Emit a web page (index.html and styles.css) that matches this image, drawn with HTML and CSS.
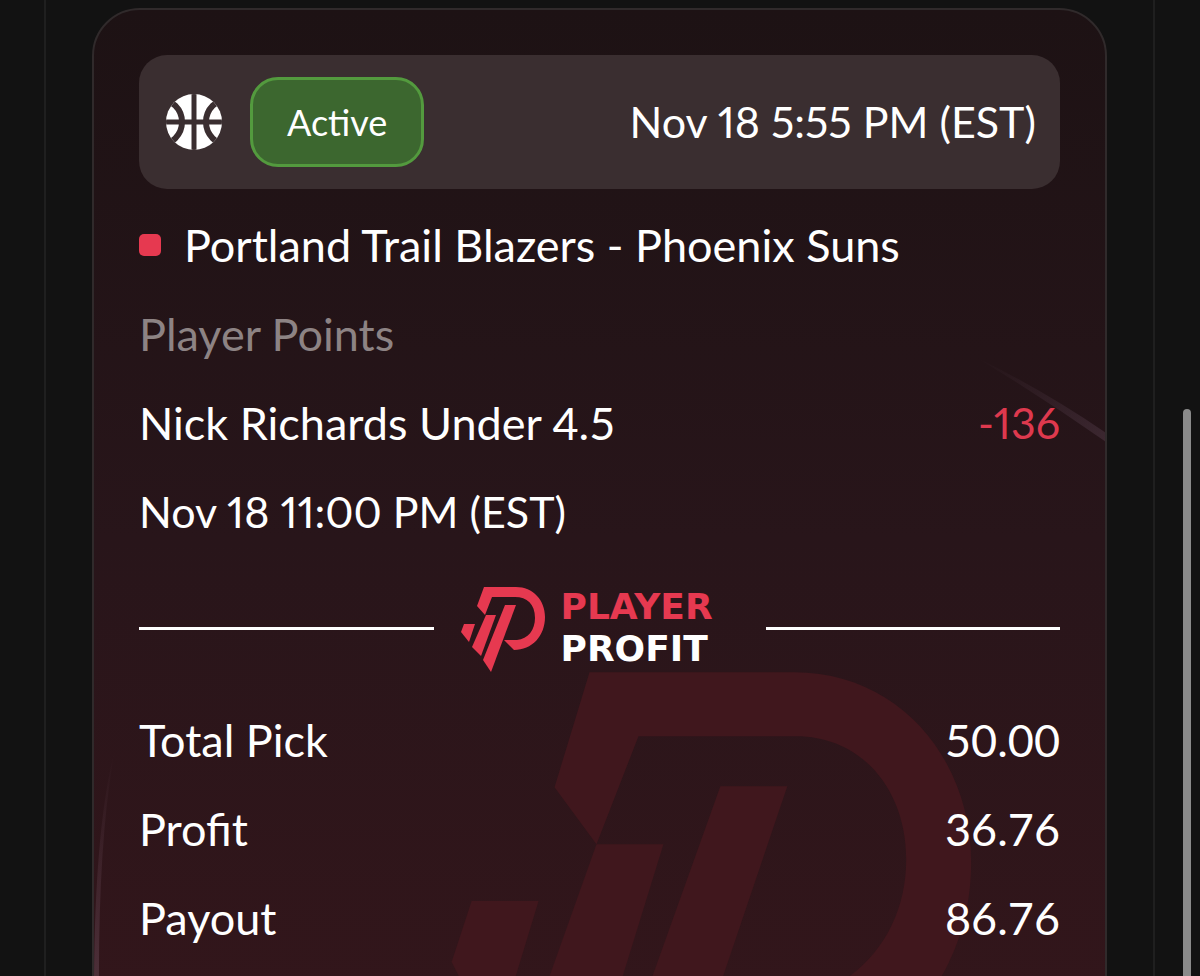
FILE: index.html
```html
<!DOCTYPE html>
<html lang="en">
  <head>
    <meta charset="utf-8">
    <title>Player Profit</title>
    <link rel="stylesheet" href="styles.css">
  </head>
  <body>
    <main class="panel">
      <article class="card">
        <svg class="card-bg" viewBox="94 10 1012 1064" preserveAspectRatio="xMaxYMin slice" aria-hidden="true">
          <defs>
            <linearGradient id="streak-right" x1="0" y1="0" x2="1" y2="1">
              <stop offset="0" stop-color="#4a3440" stop-opacity="0"/>
              <stop offset="1" stop-color="#4a3440" stop-opacity=".6"/>
            </linearGradient>
            <linearGradient id="streak-left" x1="0" y1="0" x2="0" y2="1">
              <stop offset="0" stop-color="#5a3c48" stop-opacity="0"/>
              <stop offset="1" stop-color="#5a3c48" stop-opacity=".7"/>
            </linearGradient>
          </defs>
          <path d="M976 357Q1045 391 1108 434V443Q1045 399 976 357Z" fill="url(#streak-right)"/>
          <path d="M115 750Q94 830 94 994H99Q98 840 115 750Z" fill="url(#streak-left)"/>
          <g fill="#40171d">
            <path d="M590 673H795C900 673 972 760 972 863C972 912 958 956 932 994H822C878 968 907 918 907 860C907 790 862 737 797 737H639L597 845L555 788Z"/>
            <path d="M721 787H788L718 994H647Z"/>
            <path d="M597 845H664L618 994H544Z"/>
            <path d="M472 902H539L511 994H468L452 963Z"/>
          </g>
        </svg>

        <header class="card-head">
          <svg class="ball" viewBox="0 0 56 56" role="img" aria-label="Basketball">
            <defs>
              <clipPath id="ball-clip"><circle cx="28" cy="28" r="28"/></clipPath>
            </defs>
            <circle cx="28" cy="28" r="28" fill="#fff"/>
            <g clip-path="url(#ball-clip)" fill="none" stroke="#3a2e30">
              <path d="M28 0V56M0 28H56" stroke-width="5"/>
              <g stroke-width="6">
                <circle cx="-7" cy="28" r="23"/>
                <circle cx="63" cy="28" r="23"/>
              </g>
            </g>
          </svg>
          <span class="status">Active</span>
          <time class="placed">Nov 18 5:55 PM (EST)</time>
        </header>

        <div class="rows">
          <h2 class="row match">Portland Trail Blazers - Phoenix Suns</h2>
          <p class="row market">Player Points</p>
          <p class="row"><span>Nick Richards Under 4.5</span><span class="odds">-136</span></p>
          <p class="row"><time>Nov 18 11:00 PM (EST)</time></p>
        </div>

        <div class="divider">
          <svg class="mark" viewBox="0 0 84 88" aria-hidden="true">
            <g fill="#e63950">
              <path d="M23 3H55C72 3 84 16 84 33C84 52 71 66 53 66L43 56L56 56C67 55 74 46 74 34C74 20 66 13 54 13H31L24 31L16 22Z"/>
              <path d="M44 21H55L30 88L22 76Z"/>
              <path d="M25 31H35L20 72L11 63Z"/>
              <path d="M3 40H14L8 58L0 48Z"/>
            </g>
          </svg>
          <div class="wordmark"><span class="red">PLAYER</span><span>PROFIT</span></div>
        </div>

        <dl class="rows totals">
          <div class="row"><dt>Total Pick</dt><dd>50.00</dd></div>
          <div class="row"><dt>Profit</dt><dd>36.76</dd></div>
          <div class="row"><dt>Payout</dt><dd>86.76</dd></div>
        </dl>
      </article>
    </main>
    <div class="scroll-thumb"></div>
  </body>
</html>
```

FILE: styles.css
```css
* {
  box-sizing: border-box;
}
body {
  margin: 0;
  background: #121212;
  color: #fff;
  font-family: Lato, "Liberation Sans", sans-serif;
  font-size: 45px;
  line-height: 56px;
}
h2,
p,
dl,
dd {
  margin: 0;
  font-size: inherit;
  font-weight: 400;
}
.panel {
  height: 100vh;
  margin: 0 45px 0 44px;
  padding: 8px 46px;
  border: solid #1f1f1f;
  border-width: 0 2px;
  overflow: hidden;
}
.card {
  position: relative;
  padding: 45px 45px 120px;
  border: 2px solid #302a2b;
  border-radius: 48px;
  background: linear-gradient(#1d1214, #28151a 50%, #34161b);
  overflow: hidden;
}
.card-bg {
  position: absolute;
  top: 0;
  left: 0;
  width: 100%;
  height: 100%;
}
.card-head,
.rows,
.divider {
  position: relative;
}
.card-head {
  display: flex;
  align-items: center;
  gap: 28px;
  height: 134px;
  padding: 0 24px 0 27px;
  border-radius: 28px;
  background: #3a2e30;
}
.ball {
  width: 56px;
  height: 56px;
}
.status {
  padding: 14px 34px;
  border: 3px solid #539a3e;
  border-radius: 28px;
  background: #3c672f;
  font-size: 36px;
}
.placed {
  margin-left: auto;
}
time,
.odds {
  font-size: 43px;
  font-variant-numeric: proportional-nums;
}
.rows {
  display: flex;
  flex-direction: column;
  gap: 33px;
  margin-top: 28px;
}
.row {
  display: flex;
  justify-content: space-between;
}
.match {
  justify-content: flex-start;
  align-items: center;
  gap: 23px;
}
.match::before {
  content: "";
  width: 22px;
  height: 22px;
  border-radius: 5px;
  background: #e63950;
}
.market {
  color: #8d8384;
}
.odds {
  color: #de394e;
}
.divider {
  display: flex;
  align-items: center;
  margin-top: 44px;
}
.divider::before,
.divider::after {
  content: "";
  flex: 1;
  height: 3px;
  background: #fff;
}
.mark {
  width: 84px;
  height: 88px;
  margin: 0 16px 0 27px;
}
.wordmark {
  display: flex;
  flex-direction: column;
  width: 178px;
  margin-right: 27px;
  font: bold 36px/42px "DejaVu Sans", sans-serif;
}
.red {
  color: #e63950;
}
.totals {
  margin-top: 40px;
}
.scroll-thumb {
  position: fixed;
  top: 409px;
  right: 9px;
  bottom: 0;
  width: 8px;
  border-radius: 4px 4px 0 0;
  background: #8a8a8a;
}
```
